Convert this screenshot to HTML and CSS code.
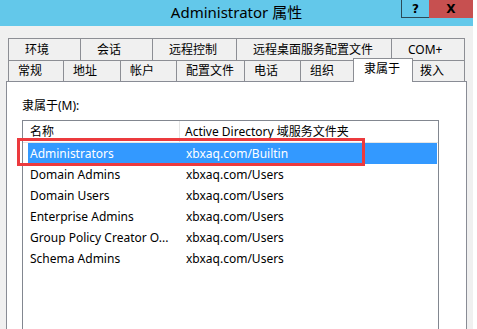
FILE: index.html
```html
<!DOCTYPE html>
<html lang="zh-CN">
<head>
    <meta charset="UTF-8">
    <title>Administrator 属性</title>
    <link rel="stylesheet" href="styles.css">
</head>
<body>

<div class="window">
    <div class="titlebar">
        <div></div>
        <div class="title">Administrator 属性</div>
        <div class="controls">
            <span class="btn-help">?</span>
            <span class="btn-close">X</span>
        </div>
    </div>

    <div class="tabs">
        <div class="tab-row row-top">
            <div class="tab">环境</div>
            <div class="tab">会话</div>
            <div class="tab">远程控制</div>
            <div class="tab">远程桌面服务配置文件</div>
            <div class="tab">COM+</div>
        </div>
        <div class="tab-row row-bottom">
            <div class="tab">常规</div>
            <div class="tab">地址</div>
            <div class="tab">帐户</div>
            <div class="tab">配置文件</div>
            <div class="tab">电话</div>
            <div class="tab">组织</div>
            <div class="tab active">隶属于</div>
            <div class="tab">拨入</div>
        </div>
    </div>

    <div class="panel">
        <div class="label">隶属于(M):</div>
        <div class="list">
            <div class="list-head">
                <div class="head-name">名称</div>
                <div class="head-folder">Active Directory 域服务文件夹</div>
            </div>
            <div class="list-row selected">
                <div class="cell-name">Administrators</div>
                <div>xbxaq.com/Builtin</div>
            </div>
            <div class="list-row">
                <div class="cell-name">Domain Admins</div>
                <div>xbxaq.com/Users</div>
            </div>
            <div class="list-row">
                <div class="cell-name">Domain Users</div>
                <div>xbxaq.com/Users</div>
            </div>
            <div class="list-row">
                <div class="cell-name">Enterprise Admins</div>
                <div>xbxaq.com/Users</div>
            </div>
            <div class="list-row">
                <div class="cell-name">Group Policy Creator O...</div>
                <div>xbxaq.com/Users</div>
            </div>
            <div class="list-row">
                <div class="cell-name">Schema Admins</div>
                <div>xbxaq.com/Users</div>
            </div>
        </div>
        <div class="mark"></div>
    </div>
</div>

</body>
</html>
```

FILE: styles.css
```css
* {
    box-sizing: border-box;
}

body {
    margin: 0;
    background-color: #fff;
    font-family: "Noto Sans", "Noto Sans CJK SC", sans-serif;
    font-size: 12px;
    color: #000;
}

.window {
    width: 473px;
    height: 329px;
    background-color: #f0f0f0;
    overflow: hidden;
}

.titlebar {
    height: 26px;
    background-color: #63c8ea;
    display: grid;
    grid-template-columns: 1fr auto 1fr;
}

.title {
    font-size: 15px;
    line-height: 25px;
    color: #000;
}

.controls {
    justify-self: end;
    align-self: start;
    display: flex;
}

.controls span {
    height: 18px;
    display: flex;
    justify-content: center;
    align-items: center;
    font-family: "DejaVu Sans", sans-serif;
    font-weight: bold;
    font-size: 12px;
}

.btn-help {
    width: 28px;
    border-left: 1px solid #2b4a57;
    border-bottom: 1px solid #2b4a57;
}

.btn-close {
    width: 44px;
    background-color: #c75050;
}

/* tabs */

.tabs {
    margin-top: 12px;
    padding-left: 8px;
}

.tab-row {
    display: flex;
}

.tab {
    background-color: #f0f0f0;
    border-top: 1px solid #8c8e94;
    border-left: 1px solid #8c8e94;
    white-space: nowrap;
}

.tab:last-child {
    border-right: 1px solid #8c8e94;
}

.row-top .tab {
    height: 22px;
    line-height: 21px;
    padding-left: 16px;
}

.row-top .tab:nth-child(1) { width: 72px; }
.row-top .tab:nth-child(2) { width: 72px; }
.row-top .tab:nth-child(3) { width: 84px; }
.row-top .tab:nth-child(4) { width: 155px; }
.row-top .tab:nth-child(5) { width: 74px; }

.row-bottom .tab {
    height: 21px;
    line-height: 20px;
    padding-left: 9px;
}

.row-bottom .tab:nth-child(1) { width: 55px; }
.row-bottom .tab:nth-child(2) { width: 57px; }
.row-bottom .tab:nth-child(3) { width: 56px; }
.row-bottom .tab:nth-child(4) { width: 68px; }
.row-bottom .tab:nth-child(5) { width: 56px; }
.row-bottom .tab:nth-child(6) { width: 53px; }
.row-bottom .tab:nth-child(7) { width: 60px; }
.row-bottom .tab:nth-child(8) { width: 53px; margin-left: -1px; padding-left: 7px; }

.row-bottom .tab.active {
    position: relative;
    z-index: 1;
    height: 24px;
    margin-top: -2px;
    margin-bottom: -1px;
    background-color: #fff;
    border-right: 1px solid #8c8e94;
    padding-left: 10px;
}

/* panel */

.panel {
    position: relative;
    margin-left: 6px;
    width: 461px;
    height: 300px;
    background-color: #fff;
    border: 1px solid #898c95;
    padding: 16px 0 0 15px;
}

.label {
    line-height: 16px;
}

.list {
    margin-top: 6px;
    width: 417px;
    height: 260px;
    border: 1px solid #828790;
}

.list-head {
    display: flex;
    height: 22px;
    border-bottom: 1px solid #e5e5e5;
}

.head-name {
    width: 157px;
    padding-left: 7px;
    line-height: 21px;
    border-right: 1px solid #e5e5e5;
}

.head-folder {
    padding-left: 5px;
    line-height: 21px;
}

.list-row {
    display: grid;
    grid-template-columns: 156px 1fr;
    height: 21px;
    line-height: 21px;
    margin: 0 1px 0 5px;
    padding-left: 2px;
}

.cell-name {
    white-space: nowrap;
}

.list-row.selected {
    background-color: #3399ff;
    color: #fff;
}

/* red annotation box over the selected row */
.mark {
    position: absolute;
    left: 10px;
    top: 56px;
    width: 348px;
    height: 28px;
    border: 3px solid #ec3a3e;
}
```
